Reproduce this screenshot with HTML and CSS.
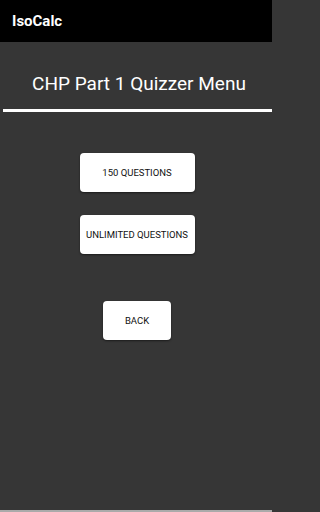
FILE: index.html
```html
<!DOCTYPE html>
<html>
<head>
<meta charset="utf-8">
<link rel="stylesheet" href="styles.css">
</head>
<body>
<div class="app">
  <header class="appbar">IsoCalc</header>
  <main class="content">
    <h1 class="title">CHP Part 1 Quizzer Menu</h1>
    <div class="rule"></div>
    <div class="buttons">
      <button class="btn btn-wide">150 QUESTIONS</button>
      <button class="btn btn-wide">UNLIMITED QUESTIONS</button>
      <button class="btn btn-back">BACK</button>
    </div>
  </main>
  <div class="bottom"></div>
</div>
</body>
</html>
```
FILE: styles.css
```css
html, body {
  margin: 0;
  padding: 0;
  height: 512px;
  overflow: hidden;
  background: #363636;
  font-family: Roboto, "Liberation Sans", sans-serif;
}
.app {
  display: flex;
  flex-direction: column;
  width: 272px;
  height: 512px;
}
.appbar {
  height: 42px;
  background: #000;
  color: #fff;
  font-weight: 700;
  font-size: 15px;
  line-height: 42px;
  padding-left: 12px;
  box-sizing: border-box;
}
.content {
  flex: 1;
  display: flex;
  flex-direction: column;
}
.title {
  margin: 30px 0 0 0;
  padding-left: 6px;
  font-weight: 400;
  font-size: 19px;
  line-height: 24px;
  color: #fff;
  text-align: center;
}
.rule {
  height: 3px;
  background: #fff;
  margin: 13px 0 0 3px;
}
.buttons {
  display: flex;
  flex-direction: column;
  align-items: center;
  padding-top: 41px;
  padding-left: 2px;
}
.btn {
  background: #fff;
  border: none;
  border-radius: 4px;
  color: #111;
  font-family: Roboto, "Liberation Sans", sans-serif;
  font-size: 9.5px;
  height: 39px;
  padding: 0;
  box-shadow: 0 1px 2px rgba(0,0,0,0.5);
}
.btn-wide {
  width: 115px;
  margin-bottom: 23px;
}
.btn-back {
  width: 68px;
  margin-top: 24px;
}
.bottom {
  height: 2px;
  background: #aaa;
}
```
